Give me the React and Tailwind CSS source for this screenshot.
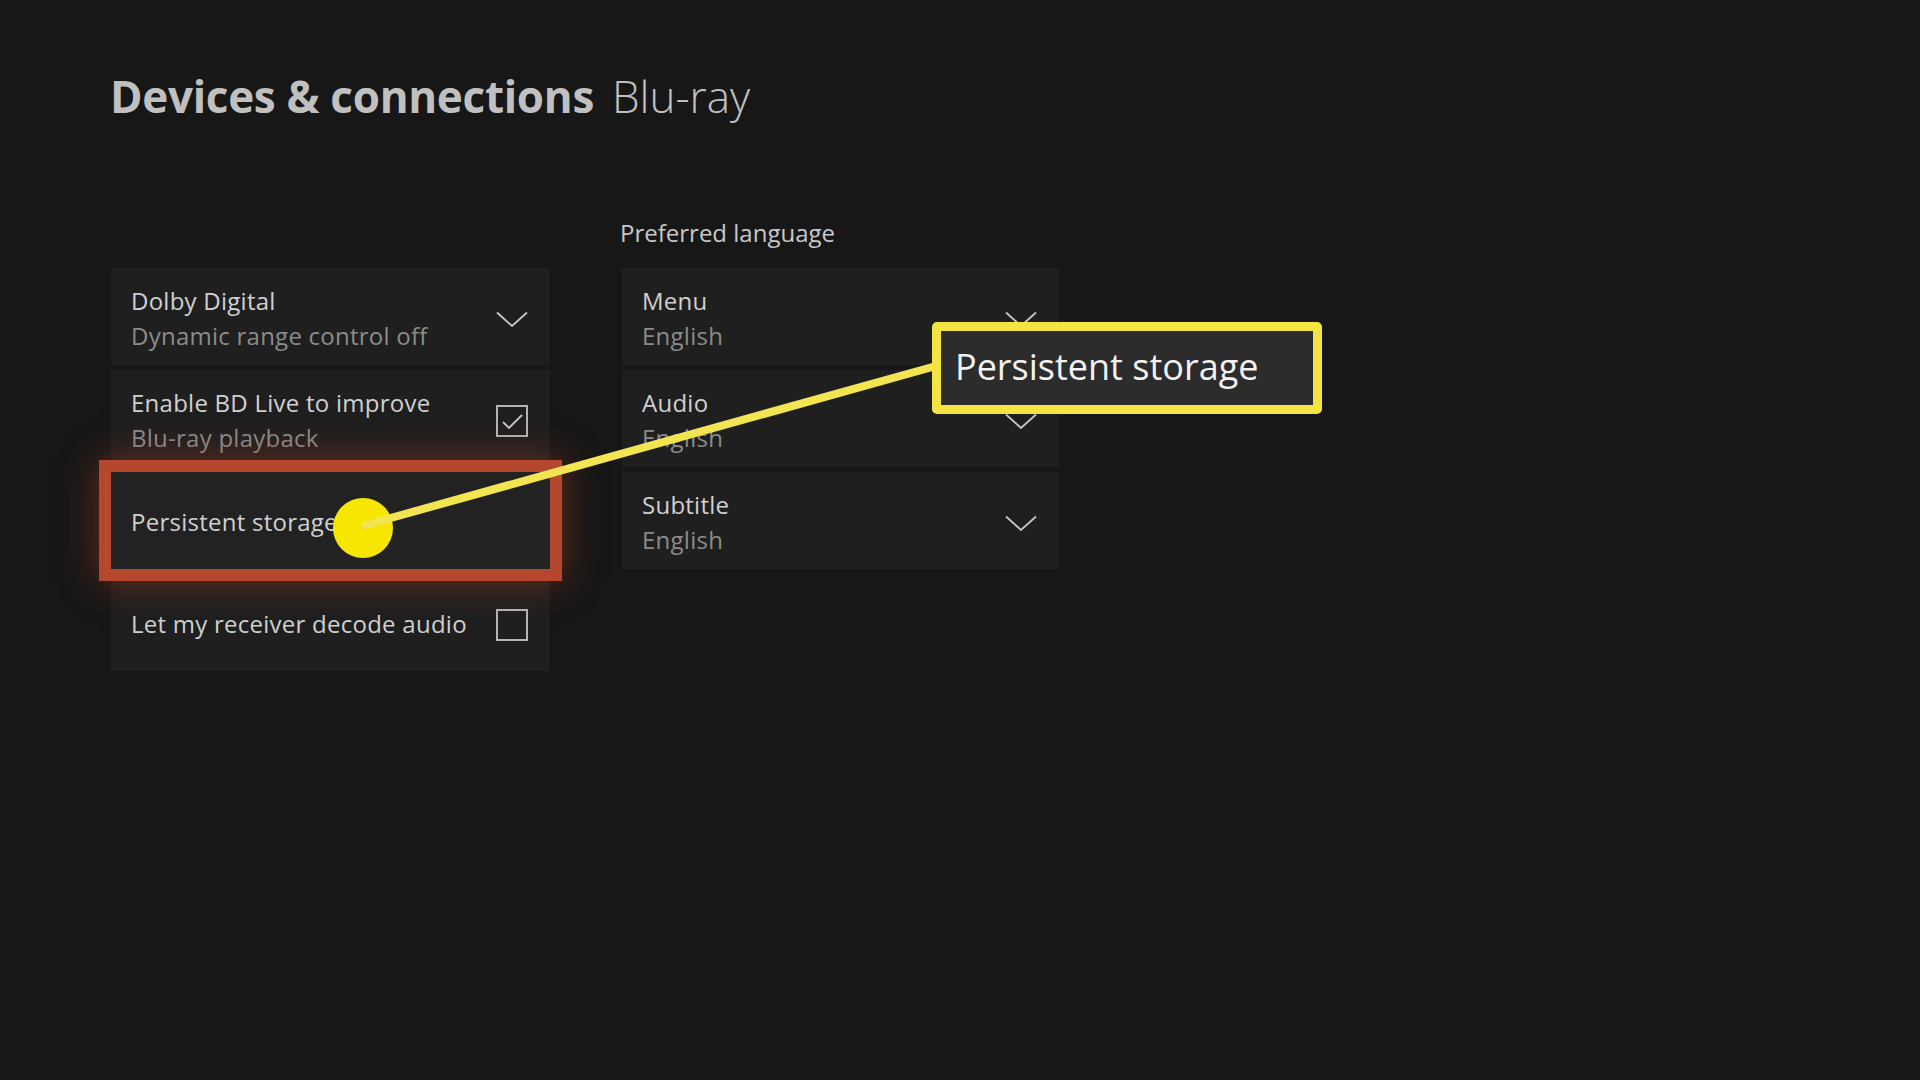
const Chevron = () => (
  <svg className="ml-auto shrink-0 mt-[4px]" width="32" height="16" viewBox="0 0 32 16" fill="none">
    <polyline points="1,1.5 16,15 31,1.5" stroke="#c6c6c6" strokeWidth="1.8" />
  </svg>
);

const Checkbox = ({ checked }) => (
  <div className="ml-auto shrink-0 mt-[4px] w-[32px] h-[32px] border-2 border-[#b4b4b4] flex items-center justify-center">
    {checked && (
      <svg width="28" height="28" viewBox="0 0 28 28" fill="none">
        <polyline points="5,15 11,21 24,8" stroke="#c6c6c6" strokeWidth="1.8" />
      </svg>
    )}
  </div>
);

const Row = ({ title, sub, right, highlight }) => (
  <div
    className={`h-[97px] px-[20px] pr-[22px] flex items-center ${
      highlight
        ? 'relative z-10 bg-[#222222] outline-solid outline-[12px] outline-[#b5472e] shadow-[0_0_34px_12px_rgba(170,60,30,0.55)]'
        : 'bg-[#1f1f1f]'
    }`}
  >
    <div className="flex flex-col text-[24px] leading-[35px] tracking-[0.25px] pt-[2px]">
      <span className="text-[#d0d0d0]">{title}</span>
      {sub && <span className="text-[#8b8b8b]">{sub}</span>}
    </div>
    {right}
  </div>
);

export default function App() {
  return (
    <div className="relative w-[1920px] h-[1080px] overflow-hidden bg-[#171717] font-['Open_Sans',sans-serif]">
      <div className="pl-[110px] pt-[68px]">
        <h1 className="flex items-baseline gap-[18px] text-[44px] leading-[56px] text-[#c0c0c0]">
          <span className="font-bold tracking-[-0.3px]">Devices &amp; connections</span>
          <span className="font-light">Blu-ray</span>
        </h1>

        <div className="mt-[94px] flex gap-[72px] pl-[1px]">
          <div className="w-[439px] flex flex-col">
            <div className="h-[50px]" />
            <div className="flex flex-col gap-[5px]">
              <Row title="Dolby Digital" sub="Dynamic range control off" right={<Chevron />} />
              <Row title="Enable BD Live to improve" sub="Blu-ray playback" right={<Checkbox checked />} />
              <Row title="Persistent storage" highlight />
              <Row title="Let my receiver decode audio" right={<Checkbox />} />
            </div>
          </div>

          <div className="w-[437px] flex flex-col">
            <div className="h-[50px] -ml-[2px] text-[24px] leading-[30px] text-[#c8c8c8]">Preferred language</div>
            <div className="flex flex-col gap-[5px]">
              <Row title="Menu" sub="English" right={<Chevron />} />
              <Row title="Audio" sub="English" right={<Chevron />} />
              <Row title="Subtitle" sub="English" right={<Chevron />} />
            </div>
          </div>
        </div>
      </div>

      <svg className="absolute inset-0 z-20 pointer-events-none" width="1920" height="1080">
        <circle cx="363" cy="528" r="30" fill="#f7e600" />
        <line x1="362" y1="526" x2="936" y2="366" stroke="#f3e552" strokeWidth="8" />
      </svg>

      <div className="absolute z-30 left-[932px] top-[322px] w-[390px] h-[92px] border-[9px] border-[#f4e442] rounded-[5px] bg-[#2c2c2c] flex items-center pl-[14px]">
        <span className="text-[36px] leading-[44px] text-[#f2f2f2] -mt-[2px]">Persistent storage</span>
      </div>
    </div>
  );
}
